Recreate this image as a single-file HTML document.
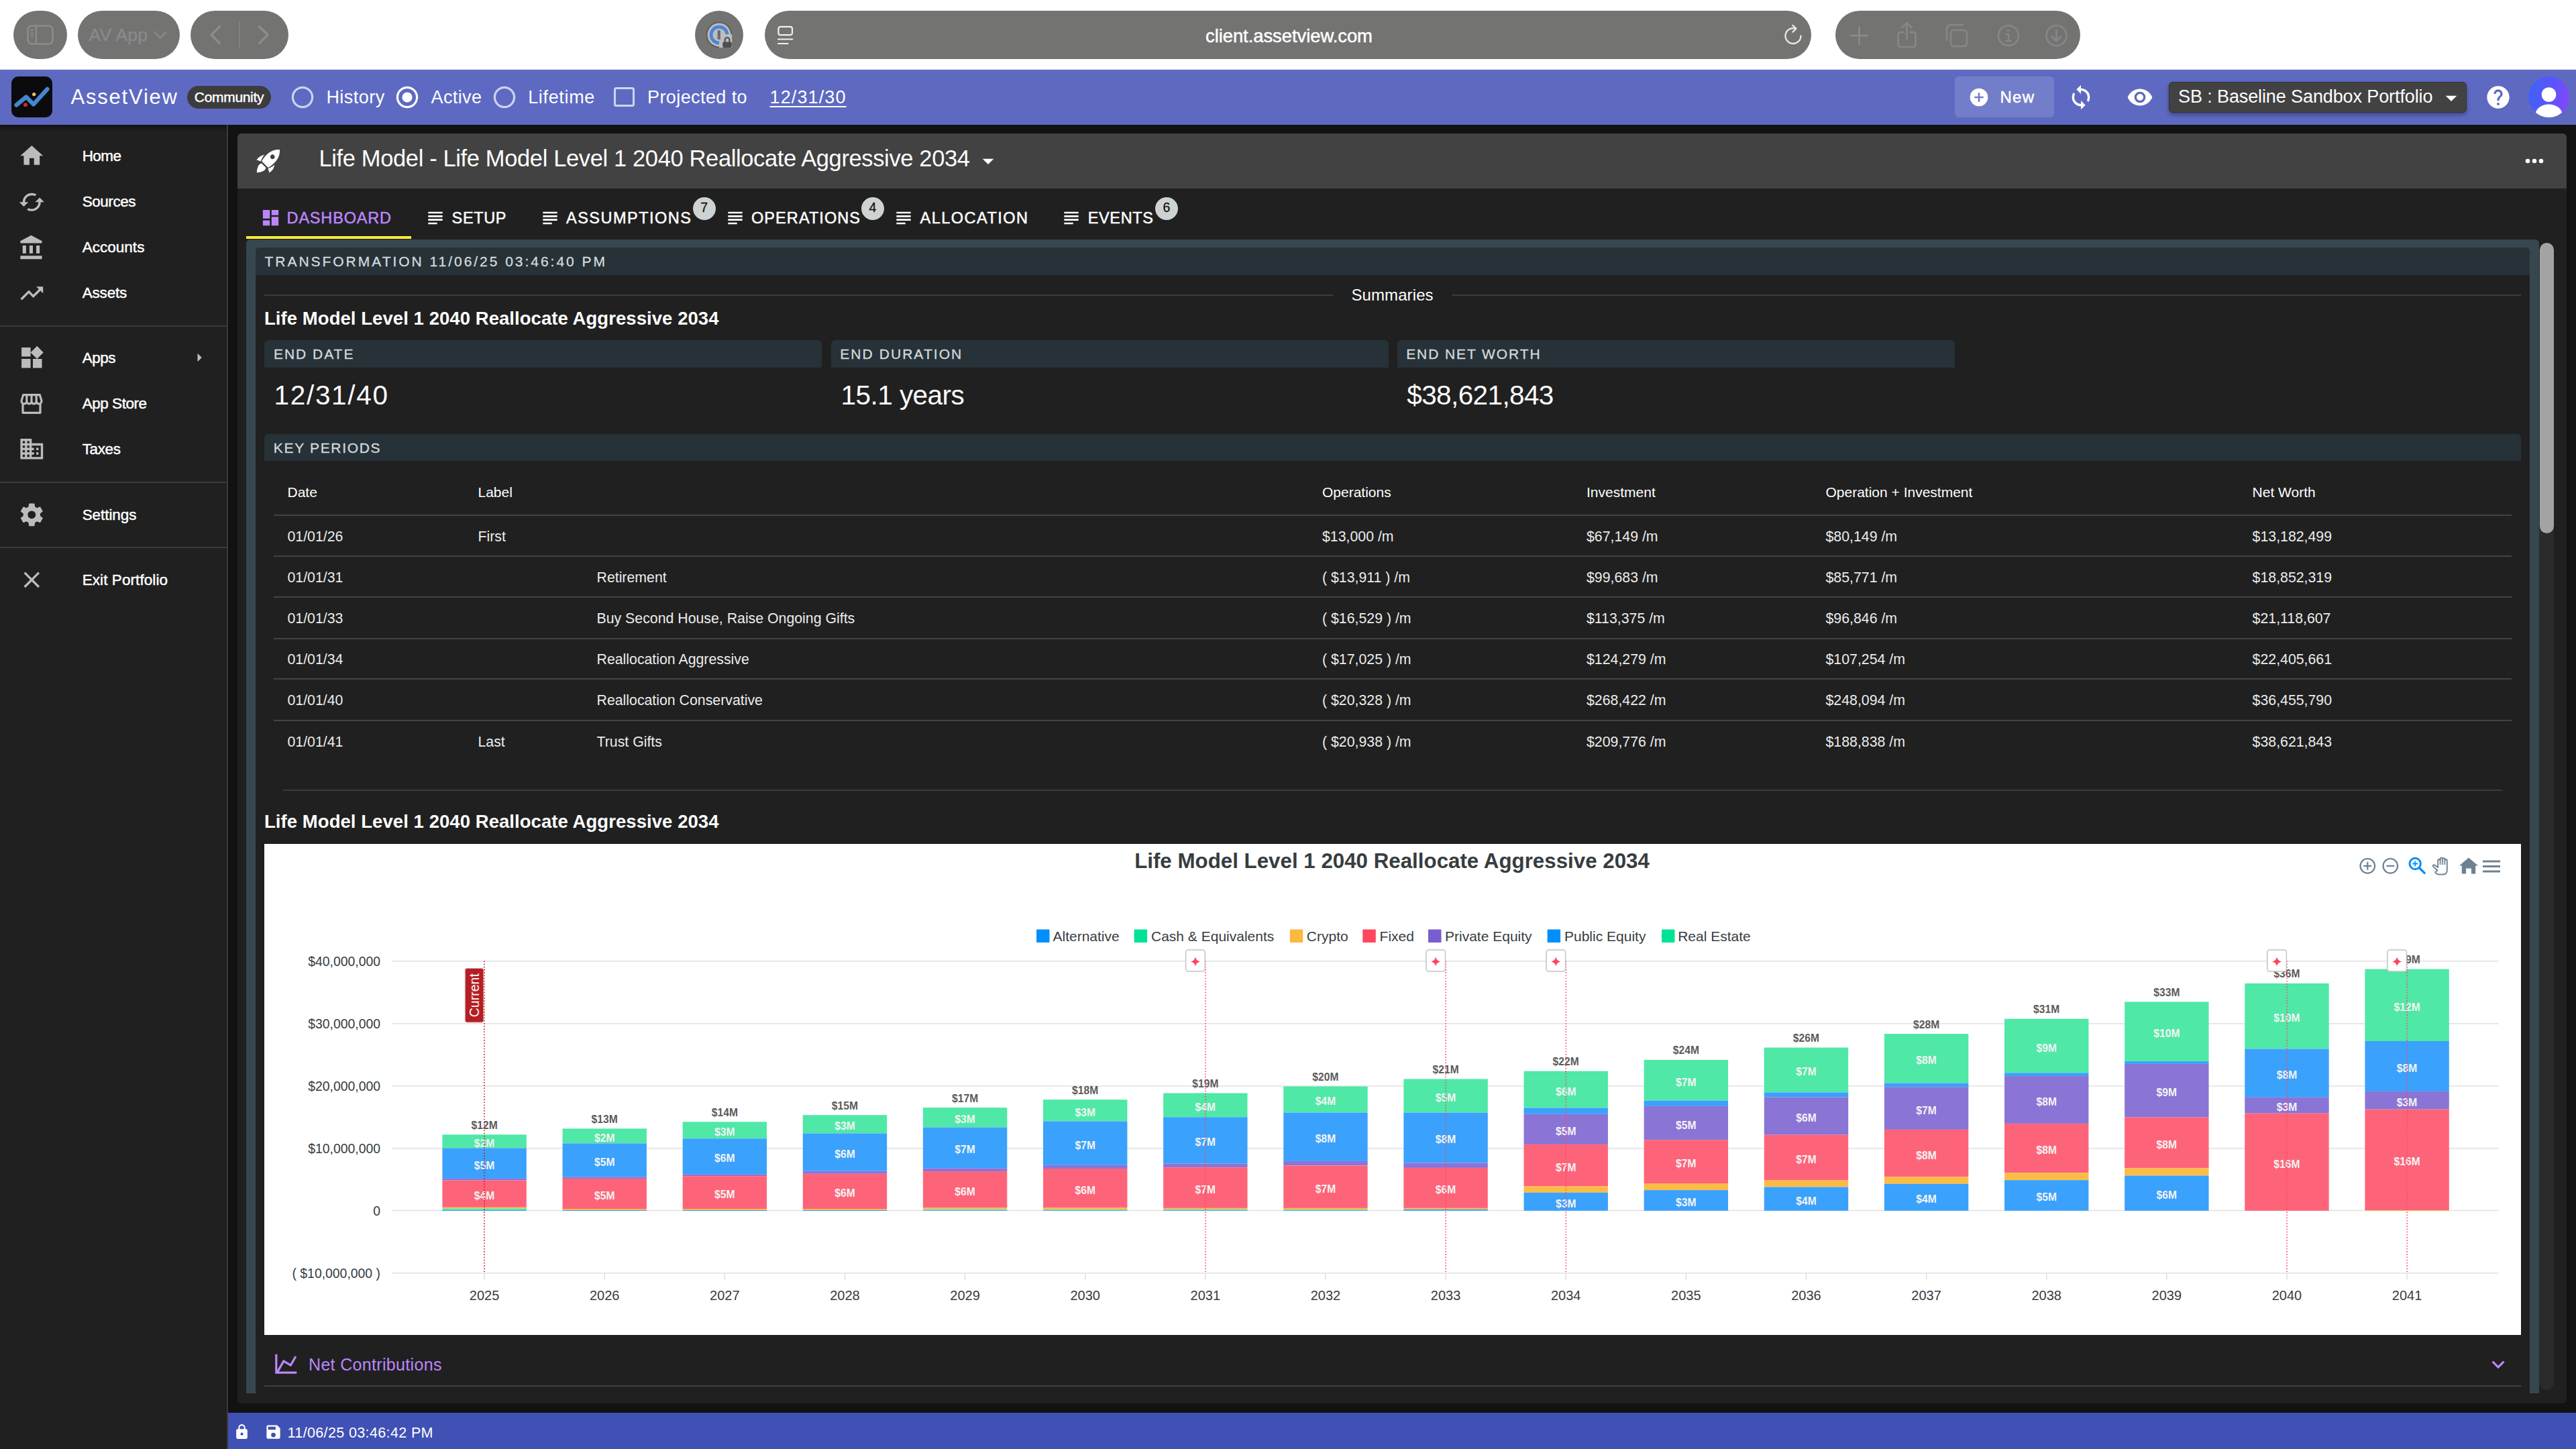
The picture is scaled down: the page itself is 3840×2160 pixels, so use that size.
<!DOCTYPE html>
<html lang="en"><head><meta charset="utf-8"><title>AssetView - Life Model</title>
<style>
html,body{margin:0;padding:0;background:#121212;}
body{width:3840px;height:2160px;overflow:hidden;position:relative;font-family:"Liberation Sans",sans-serif;}
div,svg{box-sizing:border-box;}
</style></head><body>
<div style="position:absolute;left:0.00px;top:0.00px;width:3840.00px;height:103.00px;background:#ffffff;"></div>
<div style="position:absolute;left:0.00px;top:102.50px;width:3840.00px;height:2.00px;background:#e4e4e4;"></div>
<div style="position:absolute;left:20.00px;top:16.00px;width:80.00px;height:72.00px;background:#737372;border-radius:36px;"></div>
<div style="position:absolute;left:116.00px;top:16.00px;width:152.00px;height:72.00px;background:#737372;border-radius:36px;"></div>
<div style="position:absolute;left:284.00px;top:16.00px;width:146.00px;height:72.00px;background:#737372;border-radius:36px;"></div>
<div style="position:absolute;left:1036.00px;top:16.00px;width:72.00px;height:72.00px;background:#737372;border-radius:36px;"></div>
<div style="position:absolute;left:1140.00px;top:16.00px;width:1560.00px;height:72.00px;background:#737372;border-radius:36px;"></div>
<div style="position:absolute;left:2736.00px;top:16.00px;width:365.00px;height:72.00px;background:#737372;border-radius:36px;"></div>
<svg style="position:absolute;left:40px;top:37px" width="40" height="30" viewBox="0 0 40 30"><rect x="1.5" y="1.5" width="37" height="27" rx="6" fill="none" stroke="#8c8c8c" stroke-width="2.6"/><line x1="14" y1="2" x2="14" y2="28" stroke="#8c8c8c" stroke-width="2.6"/><line x1="5.5" y1="8" x2="10" y2="8" stroke="#8c8c8c" stroke-width="2"/><line x1="5.5" y1="12.5" x2="10" y2="12.5" stroke="#8c8c8c" stroke-width="2"/><line x1="5.5" y1="17" x2="10" y2="17" stroke="#8c8c8c" stroke-width="2"/></svg>
<div style="position:absolute;left:132.50px;top:36.79px;font-size:26.50px;line-height:31.80px;color:#878a8d;white-space:pre;letter-spacing:0.212px;-webkit-text-stroke:0.50px #878a8d;">AV App</div>
<svg style="position:absolute;left:229.2px;top:46px" width="20" height="14" viewBox="0 0 20 14"><path d="M1.8 2 L10 10.5 L18.2 2" fill="none" stroke="#868686" stroke-width="3" stroke-linecap="round" stroke-linejoin="round"/></svg>
<svg style="position:absolute;left:310px;top:35px;overflow:visible" width="100" height="34" viewBox="0 0 100 34"><path d="M17.5 4.5 L4.8 17 L17.5 29.5" fill="none" stroke="#8c8c8c" stroke-width="3.2" stroke-linecap="round" stroke-linejoin="round"/><line x1="47" y1="-3" x2="47" y2="37" stroke="#868686" stroke-width="1.5"/><path d="M76.5 4.5 L89.2 17 L76.5 29.5" fill="none" stroke="#8c8c8c" stroke-width="3.2" stroke-linecap="round" stroke-linejoin="round"/></svg>
<svg style="position:absolute;left:1050px;top:30px" width="46" height="46" viewBox="0 0 46 46"><circle cx="22" cy="22" r="18.4" fill="#bdbdbd" stroke="#5e5e5e" stroke-width="2"/><circle cx="22" cy="22" r="12" fill="#bdbdbd" stroke="#4a86d8" stroke-width="4.8"/><rect x="22" y="21.2" width="19.2" height="19.8" fill="#bdbdbd"/><rect x="19.6" y="15.2" width="4.3" height="13.6" fill="#6c6c6c"/><rect x="27.2" y="32.5" width="13.6" height="8.5" rx="2" fill="#4e4e52"/><path d="M30.6 33 v-3.6 a3.4 3.4 0 0 1 6.8 0 v3.6" fill="none" stroke="#4e4e52" stroke-width="2.2"/></svg>
<svg style="position:absolute;left:1158px;top:38px" width="26" height="30" viewBox="0 0 26 30"><rect x="2.4" y="1.8" width="20.6" height="12.4" rx="3" fill="none" stroke="#f0f0f0" stroke-width="2.2"/><line x1="2" y1="20.5" x2="23.4" y2="20.5" stroke="#f0f0f0" stroke-width="2.2" stroke-linecap="round"/><line x1="2" y1="27" x2="16.5" y2="27" stroke="#f0f0f0" stroke-width="2.2" stroke-linecap="round"/></svg>
<div style="position:absolute;left:1797.00px;top:37.10px;font-size:27.50px;line-height:33.00px;color:#ffffff;white-space:pre;letter-spacing:-0.087px;-webkit-text-stroke:0.50px #ffffff;">client.assetview.com</div>
<svg style="position:absolute;left:2656px;top:36px" width="34" height="34" viewBox="0 0 34 34"><path d="M28.5 17.5 A11.5 11.5 0 1 1 20 6.4" fill="none" stroke="#e4e4e4" stroke-width="2.4" stroke-linecap="round"/><path d="M16.5 1.8 L21.5 6.6 L16.5 11.6" fill="none" stroke="#e4e4e4" stroke-width="2.4" stroke-linecap="round" stroke-linejoin="round"/></svg>
<svg style="position:absolute;left:2750px;top:30px" width="340" height="46" viewBox="0 0 340 46"><path d="M9 23 H34 M21.5 10.5 V35.5" stroke="#878787" stroke-width="3" stroke-linecap="round" fill="none"/><path transform="translate(4.5,0)" d="M83 18 h-5 a3 3 0 0 0 -3 3 v16 a3 3 0 0 0 3 3 h20 a3 3 0 0 0 3 -3 v-16 a3 3 0 0 0 -3 -3 h-5 M88 28 V5 M81 11 l7 -7 l7 7" stroke="#878787" stroke-width="2.6" stroke-linecap="round" stroke-linejoin="round" fill="none"/><rect x="158" y="15" width="24" height="24" rx="5" stroke="#878787" stroke-width="2.6" fill="none"/><path d="M152 30 v-17 a6 6 0 0 1 6 -6 h17" stroke="#878787" stroke-width="2.6" fill="none" stroke-linecap="round"/><circle cx="244" cy="23" r="15" stroke="#878787" stroke-width="2.6" fill="none"/><path d="M244 21 v10 M240.5 21 h3.5 M240 31 h8" stroke="#878787" stroke-width="2.4" fill="none" stroke-linecap="round"/><circle cx="243.5" cy="15.5" r="1.8" fill="#878787"/><circle cx="315.5" cy="23" r="15" stroke="#878787" stroke-width="2.6" fill="none"/><path d="M315.5 15 v15 M309 24.5 l6.5 6.5 l6.5 -6.5" stroke="#878787" stroke-width="2.6" fill="none" stroke-linecap="round" stroke-linejoin="round"/></svg>
<div style="position:absolute;left:0.00px;top:186.00px;width:3840.00px;height:1974.00px;background:#121212;"></div>
<div style="position:absolute;left:0.00px;top:104.00px;width:3840.00px;height:82.00px;background:#5e6ac1;"></div>
<svg style="position:absolute;left:17px;top:114px" width="61" height="61" viewBox="0 0 61 61"><rect width="61" height="61" rx="10" fill="#0b0b0d"/><path d="M7.5 42.5 L22 30.5 L33 41.5 L53.5 18.8" fill="none" stroke="#4388cf" stroke-width="6.2" stroke-linecap="round" stroke-linejoin="round"/><circle cx="33.7" cy="26.6" r="2.7" fill="#d9c26a"/><circle cx="21" cy="42.2" r="3" fill="#d6242a"/></svg>
<div style="position:absolute;left:105.50px;top:126.31px;font-size:31.00px;line-height:37.20px;color:#fff;white-space:pre;letter-spacing:1.792px;">AssetView</div>
<div style="position:absolute;left:279.00px;top:128.00px;width:125.00px;height:34.00px;background:#3c3c3c;border-radius:17px;"></div>
<div style="position:absolute;left:289.80px;top:131.97px;font-size:21.00px;line-height:25.20px;color:#fff;white-space:pre;letter-spacing:-0.312px;-webkit-text-stroke:0.45px #fff;">Community</div>
<svg style="position:absolute;left:433.4px;top:126.8px" width="36" height="36" viewBox="0 0 36 36"><circle cx="18" cy="18" r="14.6" fill="none" stroke="#cdd2ee" stroke-width="3.2"/></svg>
<div style="position:absolute;left:486.40px;top:128.89px;font-size:27.00px;line-height:32.40px;color:#fff;white-space:pre;letter-spacing:0.465px;">History</div>
<svg style="position:absolute;left:589.2px;top:126.8px" width="36" height="36" viewBox="0 0 36 36"><circle cx="18" cy="18" r="14.6" fill="none" stroke="#fff" stroke-width="3.2"/><circle cx="18" cy="18" r="7.6" fill="#fff"/></svg>
<div style="position:absolute;left:642.60px;top:128.89px;font-size:27.00px;line-height:32.40px;color:#fff;white-space:pre;letter-spacing:0.375px;">Active</div>
<svg style="position:absolute;left:734.1px;top:126.8px" width="36" height="36" viewBox="0 0 36 36"><circle cx="18" cy="18" r="14.6" fill="none" stroke="#cdd2ee" stroke-width="3.2"/></svg>
<div style="position:absolute;left:787.20px;top:128.89px;font-size:27.00px;line-height:32.40px;color:#fff;white-space:pre;letter-spacing:0.651px;">Lifetime</div>
<div style="position:absolute;left:915px;top:129.6px;width:30.6px;height:29.6px;border:3.3px solid #cdd5ee;border-radius:3.5px"></div>
<div style="position:absolute;left:965.00px;top:128.89px;font-size:27.00px;line-height:32.40px;color:#fff;white-space:pre;letter-spacing:0.410px;">Projected to</div>
<div style="position:absolute;left:1147.50px;top:128.89px;font-size:27.00px;line-height:32.40px;color:#fff;white-space:pre;letter-spacing:1.114px;text-decoration:underline;text-decoration-thickness:2px;text-underline-offset:4px;">12/31/30</div>
<div style="position:absolute;left:2914.00px;top:114.00px;width:148.00px;height:61.00px;background:#727ec9;border-radius:6px;"></div>
<svg style="position:absolute;left:2933.70px;top:128.70px;" width="32.00" height="32.00" viewBox="0 0 24 24"><path fill="#fff" d="M17,13H13V17H11V13H7V11H11V7H13V11H17M12,2A10,10 0 0,0 2,12A10,10 0 0,0 12,22A10,10 0 0,0 22,12A10,10 0 0,0 12,2Z"/></svg>
<div style="position:absolute;left:2981.40px;top:130.68px;font-size:24.00px;line-height:28.80px;color:#fff;white-space:pre;letter-spacing:1.293px;-webkit-text-stroke:0.50px #fff;">New</div>
<svg style="position:absolute;left:3082.00px;top:125.00px;" width="40.00" height="40.00" viewBox="0 0 24 24"><path fill="#fff" d="M12,18A6,6 0 0,1 6,12C6,11 6.25,10.03 6.7,9.2L5.24,7.74C4.46,8.97 4,10.43 4,12A8,8 0 0,0 12,20V23L16,19L12,15M12,4V1L8,5L12,9V6A6,6 0 0,1 18,12C18,13 17.75,13.97 17.3,14.8L18.76,16.26C19.54,15.03 20,13.57 20,12A8,8 0 0,0 12,4Z"/></svg>
<svg style="position:absolute;left:3170.00px;top:125.00px;" width="40.00" height="40.00" viewBox="0 0 24 24"><path fill="#fff" d="M12,9A3,3 0 0,0 9,12A3,3 0 0,0 12,15A3,3 0 0,0 15,12A3,3 0 0,0 12,9M12,17A5,5 0 0,1 7,12A5,5 0 0,1 12,7A5,5 0 0,1 17,12A5,5 0 0,1 12,17M12,4.5C7,4.5 2.73,7.61 1,12C2.73,16.39 7,19.5 12,19.5C17,19.5 21.27,16.39 23,12C21.27,7.61 17,4.5 12,4.5Z"/></svg>
<div style="position:absolute;left:3232.50px;top:121.50px;width:444.00px;height:46.50px;background:#424242;border-radius:6px;border:1.5px solid #333;box-shadow:0 3px 6px rgba(0,0,0,.35);"></div>
<div style="position:absolute;left:3247.00px;top:127.89px;font-size:27.00px;line-height:32.40px;color:#fff;white-space:pre;letter-spacing:-0.108px;">SB : Baseline Sandbox Portfolio</div>
<svg style="position:absolute;left:3634.00px;top:125.50px;" width="40.00" height="40.00" viewBox="0 0 24 24"><path fill="#fff" d="M7,10L12,15L17,10H7Z"/></svg>
<svg style="position:absolute;left:3704.00px;top:125.00px;" width="40.00" height="40.00" viewBox="0 0 24 24"><path fill="#fff" d="M15.07,11.25L14.17,12.17C13.45,12.89 13,13.5 13,15H11V14.5C11,13.39 11.45,12.39 12.17,11.67L13.41,10.41C13.78,10.05 14,9.55 14,9C14,7.89 13.1,7 12,7A2,2 0 0,0 10,9H8A4,4 0 0,1 12,5A4,4 0 0,1 16,9C16,9.88 15.64,10.67 15.07,11.25M13,19H11V17H13M12,2A10,10 0 0,0 2,12A10,10 0 0,0 12,22A10,10 0 0,0 22,12C22,6.47 17.5,2 12,2Z"/></svg>
<svg style="position:absolute;left:3768.5px;top:114px" width="61" height="61" viewBox="0 0 61 61"><defs><linearGradient id="avg" x1="0" y1="0.3" x2="1" y2="0.5"><stop offset="0" stop-color="#3f63f6"/><stop offset="0.55" stop-color="#5a55fa"/><stop offset="1" stop-color="#8447fb"/></linearGradient><clipPath id="avc"><circle cx="30.5" cy="30.5" r="30.5"/></clipPath></defs><circle cx="30.5" cy="30.5" r="30.5" fill="url(#avg)"/><g clip-path="url(#avc)" fill="#fff"><circle cx="30.5" cy="27" r="10.8"/><ellipse cx="30.5" cy="58" rx="20.5" ry="16.5"/></g></svg>
<div style="position:absolute;left:0.00px;top:186.00px;width:338.50px;height:1974.00px;background:#202020;"></div>
<div style="position:absolute;left:338.00px;top:186.00px;width:2.00px;height:1974.00px;background:#3a3a3a;"></div>
<div style="position:absolute;left:0.00px;top:186.00px;width:338.00px;height:11.00px;background:linear-gradient(rgba(0,0,0,.38),rgba(0,0,0,0));"></div>
<svg style="position:absolute;left:27.20px;top:212.40px;" width="40.60" height="40.60" viewBox="0 0 24 24"><path fill="#bcbcbc" d="M10,20V14H14V20H19V12H22L12,3L2,12H5V20H10Z"/></svg>
<div style="position:absolute;left:122.70px;top:218.88px;font-size:22.50px;line-height:27.00px;color:#fff;white-space:pre;letter-spacing:-0.574px;-webkit-text-stroke:0.45px #fff;">Home</div>
<svg style="position:absolute;left:27.20px;top:280.90px;" width="40.60" height="40.60" viewBox="0 0 24 24"><path fill="#bcbcbc" d="M19,8L15,12H18A6,6 0 0,1 12,18C11,18 10.03,17.75 9.2,17.3L7.74,18.76C8.97,19.54 10.43,20 12,20A8,8 0 0,0 20,12H23M6,12A6,6 0 0,1 12,6C13,6 13.97,6.25 14.8,6.7L16.26,5.24C15.03,4.46 13.57,4 12,4A8,8 0 0,0 4,12H1L5,16L9,12"/></svg>
<div style="position:absolute;left:122.70px;top:287.38px;font-size:22.50px;line-height:27.00px;color:#fff;white-space:pre;letter-spacing:-0.457px;-webkit-text-stroke:0.45px #fff;">Sources</div>
<svg style="position:absolute;left:27.20px;top:348.90px;" width="40.60" height="40.60" viewBox="0 0 24 24"><path fill="#bcbcbc" d="M11.5,1L2,6V8H21V6M16,10V17H19V10M2,22H21V19H2M10,10V17H13V10M4,10V17H7V10H4Z"/></svg>
<div style="position:absolute;left:122.70px;top:355.38px;font-size:22.50px;line-height:27.00px;color:#fff;white-space:pre;letter-spacing:0.021px;-webkit-text-stroke:0.45px #fff;">Accounts</div>
<svg style="position:absolute;left:27.20px;top:416.90px;" width="40.60" height="40.60" viewBox="0 0 24 24"><path fill="#bcbcbc" d="M16,6L18.29,8.29L13.41,13.17L9.41,9.17L2,16.59L3.41,18L9.41,12L13.41,16L19.71,9.71L22,12V6H16Z"/></svg>
<div style="position:absolute;left:122.70px;top:423.38px;font-size:22.50px;line-height:27.00px;color:#fff;white-space:pre;letter-spacing:-0.185px;-webkit-text-stroke:0.45px #fff;">Assets</div>
<svg style="position:absolute;left:27.20px;top:513.40px;" width="40.60" height="40.60" viewBox="0 0 24 24"><path fill="#bcbcbc" d="M3,3H11V11H3V3M3,13H11V21H3V13M13,13H21V21H13V13M16.66,1.69L22.31,7.34L16.66,13L11,7.34L16.66,1.69Z"/></svg>
<div style="position:absolute;left:122.70px;top:519.88px;font-size:22.50px;line-height:27.00px;color:#fff;white-space:pre;letter-spacing:-0.495px;-webkit-text-stroke:0.45px #fff;">Apps</div>
<svg style="position:absolute;left:27.3px;top:581.7px" width="40" height="40" viewBox="0 0 24 24"><path fill="none" stroke="#bcbcbc" stroke-width="1.9" stroke-linejoin="round" d="M4.6 4 H19.4 L21 9.3 C21 11 19.9 12 18.6 12 C17.3 12 16.3 11 16.3 9.6 C16.3 11 15.3 12 14.1 12 C12.9 12 12 11 12 9.6 C12 11 11.1 12 9.9 12 C8.7 12 7.7 11 7.7 9.6 C7.7 11 6.7 12 5.4 12 C4.1 12 3 11 3 9.3 Z M4.2 12 V20 H19.8 V12 M7.7 4 V9.6 M12 4 V9.6 M16.3 4 V9.6"/></svg>
<div style="position:absolute;left:122.70px;top:587.88px;font-size:22.50px;line-height:27.00px;color:#fff;white-space:pre;letter-spacing:-0.471px;-webkit-text-stroke:0.45px #fff;">App Store</div>
<svg style="position:absolute;left:27.20px;top:649.40px;" width="40.60" height="40.60" viewBox="0 0 24 24"><path fill="#bcbcbc" d="M18,15H16V17H18M18,11H16V13H18M20,19H12V17H14V15H12V13H14V11H12V9H20M10,7H8V5H10M10,11H8V9H10M10,15H8V13H10M10,19H8V17H10M6,7H4V5H6M6,11H4V9H6M6,15H4V13H6M6,19H4V17H6M12,7V3H2V21H22V7H12Z"/></svg>
<div style="position:absolute;left:122.70px;top:655.88px;font-size:22.50px;line-height:27.00px;color:#fff;white-space:pre;letter-spacing:-0.369px;-webkit-text-stroke:0.45px #fff;">Taxes</div>
<svg style="position:absolute;left:27.20px;top:747.40px;" width="40.60" height="40.60" viewBox="0 0 24 24"><path fill="#bcbcbc" d="M12,15.5A3.5,3.5 0 0,1 8.5,12A3.5,3.5 0 0,1 12,8.5A3.5,3.5 0 0,1 15.5,12A3.5,3.5 0 0,1 12,15.5M19.43,12.97C19.47,12.65 19.5,12.33 19.5,12C19.5,11.67 19.47,11.34 19.43,11L21.54,9.37C21.73,9.22 21.78,8.95 21.66,8.73L19.66,5.27C19.54,5.05 19.27,4.96 19.05,5.05L16.56,6.05C16.04,5.66 15.5,5.32 14.87,5.07L14.5,2.42C14.46,2.18 14.25,2 14,2H10C9.75,2 9.54,2.18 9.5,2.42L9.13,5.07C8.5,5.32 7.96,5.66 7.44,6.05L4.95,5.05C4.73,4.96 4.46,5.05 4.34,5.27L2.34,8.73C2.21,8.95 2.27,9.22 2.46,9.37L4.57,11C4.53,11.34 4.5,11.67 4.5,12C4.5,12.33 4.53,12.65 4.57,12.97L2.46,14.63C2.27,14.78 2.21,15.05 2.34,15.27L4.34,18.73C4.46,18.95 4.73,19.03 4.95,18.95L7.44,17.94C7.96,18.34 8.5,18.68 9.13,18.93L9.5,21.58C9.54,21.82 9.75,22 10,22H14C14.25,22 14.46,21.82 14.5,21.58L14.87,18.93C15.5,18.67 16.04,18.34 16.56,17.94L19.05,18.95C19.27,19.03 19.54,18.95 19.66,18.73L21.66,15.27C21.78,15.05 21.73,14.78 21.54,14.63L19.43,12.97Z"/></svg>
<div style="position:absolute;left:122.70px;top:753.88px;font-size:22.50px;line-height:27.00px;color:#fff;white-space:pre;letter-spacing:-0.072px;-webkit-text-stroke:0.45px #fff;">Settings</div>
<svg style="position:absolute;left:27.20px;top:844.40px;" width="40.60" height="40.60" viewBox="0 0 24 24"><path fill="#bcbcbc" d="M19,6.41L17.59,5L12,10.59L6.41,5L5,6.41L10.59,12L5,17.59L6.41,19L12,13.41L17.59,19L19,17.59L13.41,12L19,6.41Z"/></svg>
<div style="position:absolute;left:122.70px;top:850.88px;font-size:22.50px;line-height:27.00px;color:#fff;white-space:pre;letter-spacing:0.077px;-webkit-text-stroke:0.45px #fff;">Exit Portfolio</div>
<svg style="position:absolute;left:282.00px;top:518.00px;" width="30.00" height="30.00" viewBox="0 0 24 24"><path fill="#bcbcbc" d="M10,17L15,12L10,7V17Z"/></svg>
<div style="position:absolute;left:0.00px;top:485.00px;width:338.00px;height:2.00px;background:#3a3a3a;"></div>
<div style="position:absolute;left:0.00px;top:718.00px;width:338.00px;height:2.00px;background:#3a3a3a;"></div>
<div style="position:absolute;left:0.00px;top:815.00px;width:338.00px;height:2.00px;background:#3a3a3a;"></div>
<div style="position:absolute;left:340.00px;top:2105.50px;width:3500.00px;height:54.50px;background:#3f51b5;"></div>
<svg style="position:absolute;left:347.50px;top:2122.00px;" width="25.00" height="25.00" viewBox="0 0 24 24"><path fill="#fff" d="M12,17A2,2 0 0,0 14,15C14,13.89 13.1,13 12,13A2,2 0 0,0 10,15A2,2 0 0,0 12,17M18,8A2,2 0 0,1 20,10V20A2,2 0 0,1 18,22H6A2,2 0 0,1 4,20V10C4,8.89 4.9,8 6,8H7V6A5,5 0 0,1 12,1A5,5 0 0,1 17,6V8H18M12,3A3,3 0 0,0 9,6V8H15V6A3,3 0 0,0 12,3Z"/></svg>
<svg style="position:absolute;left:393.90px;top:2121.00px;" width="27.00" height="27.00" viewBox="0 0 24 24"><path fill="#fff" d="M15,9H5V5H15M12,19A3,3 0 0,1 9,16A3,3 0 0,1 12,13A3,3 0 0,1 15,16A3,3 0 0,1 12,19M17,3H5C3.89,3 3,3.9 3,5V19A2,2 0 0,0 5,21H19A2,2 0 0,0 21,19V7L17,3Z"/></svg>
<div style="position:absolute;left:428.60px;top:2123.78px;font-size:21.50px;line-height:25.80px;color:#fff;white-space:pre;letter-spacing:0.364px;">11/06/25 03:46:42 PM</div>
<div style="position:absolute;left:354.00px;top:198.50px;width:3472.00px;height:1893.50px;background:#202020;border-radius:6px;"></div>
<div style="position:absolute;left:354.00px;top:198.50px;width:3472.00px;height:82.50px;background:#424242;border-radius:6px 6px 0 0;"></div>
<svg style="position:absolute;left:375px;top:215px" width="50" height="50" viewBox="-25 -25 50 50"><g transform="rotate(45)" fill="#fff"><path fill-rule="evenodd" d="M0,-24 C8.5,-17 10.2,-5 6.8,7.2 L-6.8,7.2 C-10.2,-5 -8.5,-17 0,-24Z M0,-12.2 a3.4,3.4 0 1,0 0.01,0Z"/><path d="M-10.6,-2.5 C-13.5,1.5 -14.5,6 -13.6,11.2 L-7.6,8.4 C-9.3,5 -10.3,1.5 -10.6,-2.5Z"/><path d="M10.6,-2.5 C13.5,1.5 14.5,6 13.6,11.2 L7.6,8.4 C9.3,5 10.3,1.5 10.6,-2.5Z"/><path d="M-4.6,9.6 C-7.5,14 -4.5,19 0,24.5 C4.5,19 7.5,14 4.6,9.6Z"/></g></svg>
<div style="position:absolute;left:475.50px;top:216.22px;font-size:34.50px;line-height:41.40px;color:#fff;white-space:pre;letter-spacing:-0.371px;">Life Model - Life Model Level 1 2040 Reallocate Aggressive 2034</div>
<svg style="position:absolute;left:1453.00px;top:220.00px;" width="40.00" height="40.00" viewBox="0 0 24 24"><path fill="#fff" d="M7,10L12,15L17,10H7Z"/></svg>
<svg style="position:absolute;left:3758.00px;top:219.50px;" width="40.00" height="40.00" viewBox="0 0 24 24"><path fill="#fff" d="M16,12A2,2 0 0,1 18,10A2,2 0 0,1 20,12A2,2 0 0,1 18,14A2,2 0 0,1 16,12M10,12A2,2 0 0,1 12,10A2,2 0 0,1 14,12A2,2 0 0,1 12,14A2,2 0 0,1 10,12M4,12A2,2 0 0,1 6,10A2,2 0 0,1 8,12A2,2 0 0,1 6,14A2,2 0 0,1 4,12Z"/></svg>
<svg style="position:absolute;left:387.50px;top:309.00px;" width="31.00" height="31.00" viewBox="0 0 24 24"><path fill="#bb86fc" d="M13,3V9H21V3M13,21H21V11H13M3,21H11V15H3M3,13H11V3H3V13Z"/></svg>
<div style="position:absolute;left:427.60px;top:310.78px;font-size:23.50px;line-height:28.20px;color:#bb86fc;white-space:pre;letter-spacing:0.817px;-webkit-text-stroke:0.50px #bb86fc;">DASHBOARD</div>
<svg style="position:absolute;left:633.00px;top:308.50px;" width="32.00" height="32.00" viewBox="0 0 24 24"><path fill="#fff" d="M14 17H4v2h10v-2zm6-8H4v2h16V9zM4 15h16v-2H4v2zM4 5v2h16V5H4z"/></svg>
<div style="position:absolute;left:673.60px;top:310.78px;font-size:23.50px;line-height:28.20px;color:#fff;white-space:pre;letter-spacing:0.637px;-webkit-text-stroke:0.50px #fff;">SETUP</div>
<svg style="position:absolute;left:804.00px;top:308.50px;" width="32.00" height="32.00" viewBox="0 0 24 24"><path fill="#fff" d="M14 17H4v2h10v-2zm6-8H4v2h16V9zM4 15h16v-2H4v2zM4 5v2h16V5H4z"/></svg>
<div style="position:absolute;left:844.00px;top:310.78px;font-size:23.50px;line-height:28.20px;color:#fff;white-space:pre;letter-spacing:1.494px;-webkit-text-stroke:0.50px #fff;">ASSUMPTIONS</div>
<div style="position:absolute;left:1032.6px;top:293.5px;width:34px;height:34px;border-radius:17px;background:#cfd2d2"></div>
<div style="position:absolute;left:1044.18px;top:298.37px;font-size:19.50px;line-height:23.40px;color:#111;white-space:pre;-webkit-text-stroke:0.30px #111;">7</div>
<svg style="position:absolute;left:1080.00px;top:308.50px;" width="32.00" height="32.00" viewBox="0 0 24 24"><path fill="#fff" d="M14 17H4v2h10v-2zm6-8H4v2h16V9zM4 15h16v-2H4v2zM4 5v2h16V5H4z"/></svg>
<div style="position:absolute;left:1120.00px;top:310.78px;font-size:23.50px;line-height:28.20px;color:#fff;white-space:pre;letter-spacing:1.073px;-webkit-text-stroke:0.50px #fff;">OPERATIONS</div>
<div style="position:absolute;left:1284.0px;top:293.5px;width:34px;height:34px;border-radius:17px;background:#cfd2d2"></div>
<div style="position:absolute;left:1295.58px;top:298.37px;font-size:19.50px;line-height:23.40px;color:#111;white-space:pre;-webkit-text-stroke:0.30px #111;">4</div>
<svg style="position:absolute;left:1331.00px;top:308.50px;" width="32.00" height="32.00" viewBox="0 0 24 24"><path fill="#fff" d="M14 17H4v2h10v-2zm6-8H4v2h16V9zM4 15h16v-2H4v2zM4 5v2h16V5H4z"/></svg>
<div style="position:absolute;left:1371.60px;top:310.78px;font-size:23.50px;line-height:28.20px;color:#fff;white-space:pre;letter-spacing:1.474px;-webkit-text-stroke:0.50px #fff;">ALLOCATION</div>
<svg style="position:absolute;left:1581.00px;top:308.50px;" width="32.00" height="32.00" viewBox="0 0 24 24"><path fill="#fff" d="M14 17H4v2h10v-2zm6-8H4v2h16V9zM4 15h16v-2H4v2zM4 5v2h16V5H4z"/></svg>
<div style="position:absolute;left:1621.70px;top:310.78px;font-size:23.50px;line-height:28.20px;color:#fff;white-space:pre;letter-spacing:0.654px;-webkit-text-stroke:0.50px #fff;">EVENTS</div>
<div style="position:absolute;left:1722.0px;top:293.5px;width:34px;height:34px;border-radius:17px;background:#cfd2d2"></div>
<div style="position:absolute;left:1733.58px;top:298.37px;font-size:19.50px;line-height:23.40px;color:#111;white-space:pre;-webkit-text-stroke:0.30px #111;">6</div>
<div style="position:absolute;left:367.00px;top:351.50px;width:246.00px;height:4.50px;background:#ffeb3b;"></div>
<div style="position:absolute;left:3785.00px;top:362.00px;width:22.00px;height:1710.00px;background:#2b2b2b;border-radius:11px;"></div>
<div style="position:absolute;left:3785.50px;top:362.00px;width:21.50px;height:433.00px;background:#a3a3a3;border-radius:11px;"></div>
<div style="position:absolute;left:367.00px;top:357.00px;width:3418.00px;height:1719.50px;background:#37474f;border-radius:6px 6px 0 0;"></div>
<div style="position:absolute;left:381.00px;top:369.00px;width:3390.00px;height:1707.50px;background:#202020;border-radius:6px 6px 0 0;"></div>
<div style="position:absolute;left:381.00px;top:369.00px;width:3390.00px;height:41.00px;background:#263238;border-radius:6px 6px 0 0;"></div>
<div style="position:absolute;left:394.50px;top:377.47px;font-size:21.00px;line-height:25.20px;color:#d5dadc;white-space:pre;letter-spacing:2.969px;-webkit-text-stroke:0.30px #d5dadc;">TRANSFORMATION 11/06/25 03:46:40 PM</div>
<div style="position:absolute;left:394.00px;top:439.00px;width:1592.50px;height:2.00px;background:#3c3c3c;"></div>
<div style="position:absolute;left:2164.00px;top:439.00px;width:1594.00px;height:2.00px;background:#3c3c3c;"></div>
<div style="position:absolute;left:2014.40px;top:425.68px;font-size:24.00px;line-height:28.80px;color:#fff;white-space:pre;letter-spacing:0.104px;">Summaries</div>
<div style="position:absolute;left:394.00px;top:457.60px;font-size:27.50px;line-height:33.00px;color:#fff;white-space:pre;font-weight:700;letter-spacing:0.059px;">Life Model Level 1 2040 Reallocate Aggressive 2034</div>
<div style="position:absolute;left:394.00px;top:507.00px;width:831.00px;height:41.00px;background:#263238;border-radius:6px 6px 0 0;"></div>
<div style="position:absolute;left:408.00px;top:515.47px;font-size:21.00px;line-height:25.20px;color:#d5dadc;white-space:pre;letter-spacing:1.968px;-webkit-text-stroke:0.30px #d5dadc;">END DATE</div>
<div style="position:absolute;left:408.50px;top:564.64px;font-size:40.50px;line-height:48.60px;color:#fff;white-space:pre;letter-spacing:1.692px;">12/31/40</div>
<div style="position:absolute;left:1238.50px;top:507.00px;width:831.00px;height:41.00px;background:#263238;border-radius:6px 6px 0 0;"></div>
<div style="position:absolute;left:1252.20px;top:515.47px;font-size:21.00px;line-height:25.20px;color:#d5dadc;white-space:pre;letter-spacing:2.074px;-webkit-text-stroke:0.30px #d5dadc;">END DURATION</div>
<div style="position:absolute;left:1253.50px;top:564.64px;font-size:40.50px;line-height:48.60px;color:#fff;white-space:pre;letter-spacing:-0.535px;">15.1 years</div>
<div style="position:absolute;left:2083.00px;top:507.00px;width:831.00px;height:41.00px;background:#263238;border-radius:6px 6px 0 0;"></div>
<div style="position:absolute;left:2096.20px;top:515.47px;font-size:21.00px;line-height:25.20px;color:#d5dadc;white-space:pre;letter-spacing:1.903px;-webkit-text-stroke:0.30px #d5dadc;">END NET WORTH</div>
<div style="position:absolute;left:2097.30px;top:564.64px;font-size:40.50px;line-height:48.60px;color:#fff;white-space:pre;letter-spacing:-0.613px;">$38,621,843</div>
<div style="position:absolute;left:394.00px;top:647.00px;width:3363.50px;height:40.00px;background:#263238;border-radius:6px 6px 0 0;"></div>
<div style="position:absolute;left:407.80px;top:654.97px;font-size:21.00px;line-height:25.20px;color:#d5dadc;white-space:pre;letter-spacing:1.680px;-webkit-text-stroke:0.30px #d5dadc;">KEY PERIODS</div>
<div style="position:absolute;left:428.50px;top:721.47px;font-size:21.00px;line-height:25.20px;color:#fff;white-space:pre;">Date</div>
<div style="position:absolute;left:712.50px;top:721.47px;font-size:21.00px;line-height:25.20px;color:#fff;white-space:pre;">Label</div>
<div style="position:absolute;left:1971.00px;top:721.47px;font-size:21.00px;line-height:25.20px;color:#fff;white-space:pre;">Operations</div>
<div style="position:absolute;left:2365.00px;top:721.47px;font-size:21.00px;line-height:25.20px;color:#fff;white-space:pre;">Investment</div>
<div style="position:absolute;left:2721.50px;top:721.47px;font-size:21.00px;line-height:25.20px;color:#fff;white-space:pre;">Operation + Investment</div>
<div style="position:absolute;left:3357.60px;top:721.47px;font-size:21.00px;line-height:25.20px;color:#fff;white-space:pre;">Net Worth</div>
<div style="position:absolute;left:408.00px;top:767.00px;width:3336.00px;height:2.00px;background:#434343;"></div>
<div style="position:absolute;left:428.50px;top:787.89px;font-size:21.30px;line-height:25.56px;color:#ececec;white-space:pre;">01/01/26</div>
<div style="position:absolute;left:712.50px;top:787.89px;font-size:21.30px;line-height:25.56px;color:#ececec;white-space:pre;">First</div>
<div style="position:absolute;left:1971.00px;top:787.89px;font-size:21.30px;line-height:25.56px;color:#ececec;white-space:pre;">$13,000 /m</div>
<div style="position:absolute;left:2365.00px;top:787.89px;font-size:21.30px;line-height:25.56px;color:#ececec;white-space:pre;">$67,149 /m</div>
<div style="position:absolute;left:2721.50px;top:787.89px;font-size:21.30px;line-height:25.56px;color:#ececec;white-space:pre;">$80,149 /m</div>
<div style="position:absolute;left:3357.60px;top:787.89px;font-size:21.30px;line-height:25.56px;color:#ececec;white-space:pre;">$13,182,499</div>
<div style="position:absolute;left:408.00px;top:828.00px;width:3336.00px;height:2.00px;background:#434343;"></div>
<div style="position:absolute;left:428.50px;top:848.59px;font-size:21.30px;line-height:25.56px;color:#ececec;white-space:pre;">01/01/31</div>
<div style="position:absolute;left:889.50px;top:848.59px;font-size:21.30px;line-height:25.56px;color:#ececec;white-space:pre;">Retirement</div>
<div style="position:absolute;left:1971.00px;top:848.59px;font-size:21.30px;line-height:25.56px;color:#ececec;white-space:pre;">( $13,911 ) /m</div>
<div style="position:absolute;left:2365.00px;top:848.59px;font-size:21.30px;line-height:25.56px;color:#ececec;white-space:pre;">$99,683 /m</div>
<div style="position:absolute;left:2721.50px;top:848.59px;font-size:21.30px;line-height:25.56px;color:#ececec;white-space:pre;">$85,771 /m</div>
<div style="position:absolute;left:3357.60px;top:848.59px;font-size:21.30px;line-height:25.56px;color:#ececec;white-space:pre;">$18,852,319</div>
<div style="position:absolute;left:408.00px;top:889.00px;width:3336.00px;height:2.00px;background:#434343;"></div>
<div style="position:absolute;left:428.50px;top:909.59px;font-size:21.30px;line-height:25.56px;color:#ececec;white-space:pre;">01/01/33</div>
<div style="position:absolute;left:889.50px;top:909.59px;font-size:21.30px;line-height:25.56px;color:#ececec;white-space:pre;">Buy Second House, Raise Ongoing Gifts</div>
<div style="position:absolute;left:1971.00px;top:909.59px;font-size:21.30px;line-height:25.56px;color:#ececec;white-space:pre;">( $16,529 ) /m</div>
<div style="position:absolute;left:2365.00px;top:909.59px;font-size:21.30px;line-height:25.56px;color:#ececec;white-space:pre;">$113,375 /m</div>
<div style="position:absolute;left:2721.50px;top:909.59px;font-size:21.30px;line-height:25.56px;color:#ececec;white-space:pre;">$96,846 /m</div>
<div style="position:absolute;left:3357.60px;top:909.59px;font-size:21.30px;line-height:25.56px;color:#ececec;white-space:pre;">$21,118,607</div>
<div style="position:absolute;left:408.00px;top:951.00px;width:3336.00px;height:2.00px;background:#434343;"></div>
<div style="position:absolute;left:428.50px;top:970.59px;font-size:21.30px;line-height:25.56px;color:#ececec;white-space:pre;">01/01/34</div>
<div style="position:absolute;left:889.50px;top:970.59px;font-size:21.30px;line-height:25.56px;color:#ececec;white-space:pre;">Reallocation Aggressive</div>
<div style="position:absolute;left:1971.00px;top:970.59px;font-size:21.30px;line-height:25.56px;color:#ececec;white-space:pre;">( $17,025 ) /m</div>
<div style="position:absolute;left:2365.00px;top:970.59px;font-size:21.30px;line-height:25.56px;color:#ececec;white-space:pre;">$124,279 /m</div>
<div style="position:absolute;left:2721.50px;top:970.59px;font-size:21.30px;line-height:25.56px;color:#ececec;white-space:pre;">$107,254 /m</div>
<div style="position:absolute;left:3357.60px;top:970.59px;font-size:21.30px;line-height:25.56px;color:#ececec;white-space:pre;">$22,405,661</div>
<div style="position:absolute;left:408.00px;top:1011.00px;width:3336.00px;height:2.00px;background:#434343;"></div>
<div style="position:absolute;left:428.50px;top:1031.59px;font-size:21.30px;line-height:25.56px;color:#ececec;white-space:pre;">01/01/40</div>
<div style="position:absolute;left:889.50px;top:1031.59px;font-size:21.30px;line-height:25.56px;color:#ececec;white-space:pre;">Reallocation Conservative</div>
<div style="position:absolute;left:1971.00px;top:1031.59px;font-size:21.30px;line-height:25.56px;color:#ececec;white-space:pre;">( $20,328 ) /m</div>
<div style="position:absolute;left:2365.00px;top:1031.59px;font-size:21.30px;line-height:25.56px;color:#ececec;white-space:pre;">$268,422 /m</div>
<div style="position:absolute;left:2721.50px;top:1031.59px;font-size:21.30px;line-height:25.56px;color:#ececec;white-space:pre;">$248,094 /m</div>
<div style="position:absolute;left:3357.60px;top:1031.59px;font-size:21.30px;line-height:25.56px;color:#ececec;white-space:pre;">$36,455,790</div>
<div style="position:absolute;left:408.00px;top:1073.00px;width:3336.00px;height:2.00px;background:#434343;"></div>
<div style="position:absolute;left:428.50px;top:1093.89px;font-size:21.30px;line-height:25.56px;color:#ececec;white-space:pre;">01/01/41</div>
<div style="position:absolute;left:712.50px;top:1093.89px;font-size:21.30px;line-height:25.56px;color:#ececec;white-space:pre;">Last</div>
<div style="position:absolute;left:889.50px;top:1093.89px;font-size:21.30px;line-height:25.56px;color:#ececec;white-space:pre;">Trust Gifts</div>
<div style="position:absolute;left:1971.00px;top:1093.89px;font-size:21.30px;line-height:25.56px;color:#ececec;white-space:pre;">( $20,938 ) /m</div>
<div style="position:absolute;left:2365.00px;top:1093.89px;font-size:21.30px;line-height:25.56px;color:#ececec;white-space:pre;">$209,776 /m</div>
<div style="position:absolute;left:2721.50px;top:1093.89px;font-size:21.30px;line-height:25.56px;color:#ececec;white-space:pre;">$188,838 /m</div>
<div style="position:absolute;left:3357.60px;top:1093.89px;font-size:21.30px;line-height:25.56px;color:#ececec;white-space:pre;">$38,621,843</div>
<div style="position:absolute;left:422.00px;top:1176.50px;width:3307.50px;height:2.00px;background:#3c3c3c;"></div>
<div style="position:absolute;left:394.00px;top:1207.90px;font-size:27.50px;line-height:33.00px;color:#fff;white-space:pre;font-weight:700;letter-spacing:0.059px;">Life Model Level 1 2040 Reallocate Aggressive 2034</div>
<svg style="position:absolute;left:406.75px;top:2013.75px;" width="38.50" height="38.50" viewBox="0 0 24 24"><path fill="#bb86fc" d="M16,11.78L20.24,4.45L21.97,5.45L16.74,14.5L10.23,10.75L5.46,19H22V21H2V3H4V17.54L9.5,8L16,11.78Z"/></svg>
<div style="position:absolute;left:460.00px;top:2018.59px;font-size:25.00px;line-height:30.00px;color:#bb86fc;white-space:pre;letter-spacing:0.328px;">Net Contributions</div>
<svg style="position:absolute;left:3705.30px;top:2014.50px;" width="38.00" height="38.00" viewBox="0 0 24 24"><path fill="#bb86fc" d="M7.41,8.58L12,13.17L16.59,8.58L18,10L12,16L6,10L7.41,8.58Z"/></svg>
<div style="position:absolute;left:394.00px;top:2064.50px;width:3364.00px;height:2.00px;background:#404040;"></div>
<div style="position:absolute;left:394.00px;top:1257.50px;width:3364.00px;height:732.50px;background:#ffffff;"></div>
<svg style="position:absolute;left:394px;top:1257.5px" width="3364" height="732.5" viewBox="394 1257.5 3364 732.5" font-family="Liberation Sans, sans-serif"><line x1="584" x2="3725" y1="1432.30" y2="1432.30" stroke="#e0e0e0" stroke-width="1.5"/>
<text x="567.00" y="1439.59" font-size="19.40" fill="#373d3f" text-anchor="end" >$40,000,000</text>
<line x1="584" x2="3725" y1="1525.40" y2="1525.40" stroke="#e0e0e0" stroke-width="1.5"/>
<text x="567.00" y="1532.69" font-size="19.40" fill="#373d3f" text-anchor="end" >$30,000,000</text>
<line x1="584" x2="3725" y1="1618.40" y2="1618.40" stroke="#e0e0e0" stroke-width="1.5"/>
<text x="567.00" y="1625.69" font-size="19.40" fill="#373d3f" text-anchor="end" >$20,000,000</text>
<line x1="584" x2="3725" y1="1711.20" y2="1711.20" stroke="#e0e0e0" stroke-width="1.5"/>
<text x="567.00" y="1718.49" font-size="19.40" fill="#373d3f" text-anchor="end" >$10,000,000</text>
<line x1="584" x2="3725" y1="1804.10" y2="1804.10" stroke="#e0e0e0" stroke-width="1.5"/>
<text x="567.00" y="1811.39" font-size="19.40" fill="#373d3f" text-anchor="end" >0</text>
<line x1="584" x2="3725" y1="1897.30" y2="1897.30" stroke="#e0e0e0" stroke-width="1.5"/>
<text x="567.00" y="1904.59" font-size="19.40" fill="#373d3f" text-anchor="end" >( $10,000,000 )</text>
<line x1="722.10" x2="722.10" y1="1897.3" y2="1908" stroke="#e0e0e0" stroke-width="1.5"/>
<text x="722.10" y="1937.70" font-size="20.00" fill="#373d3f" text-anchor="middle" >2025</text>
<line x1="901.23" x2="901.23" y1="1897.3" y2="1908" stroke="#e0e0e0" stroke-width="1.5"/>
<text x="901.23" y="1937.70" font-size="20.00" fill="#373d3f" text-anchor="middle" >2026</text>
<line x1="1080.35" x2="1080.35" y1="1897.3" y2="1908" stroke="#e0e0e0" stroke-width="1.5"/>
<text x="1080.35" y="1937.70" font-size="20.00" fill="#373d3f" text-anchor="middle" >2027</text>
<line x1="1259.47" x2="1259.47" y1="1897.3" y2="1908" stroke="#e0e0e0" stroke-width="1.5"/>
<text x="1259.47" y="1937.70" font-size="20.00" fill="#373d3f" text-anchor="middle" >2028</text>
<line x1="1438.60" x2="1438.60" y1="1897.3" y2="1908" stroke="#e0e0e0" stroke-width="1.5"/>
<text x="1438.60" y="1937.70" font-size="20.00" fill="#373d3f" text-anchor="middle" >2029</text>
<line x1="1617.72" x2="1617.72" y1="1897.3" y2="1908" stroke="#e0e0e0" stroke-width="1.5"/>
<text x="1617.72" y="1937.70" font-size="20.00" fill="#373d3f" text-anchor="middle" >2030</text>
<line x1="1796.85" x2="1796.85" y1="1897.3" y2="1908" stroke="#e0e0e0" stroke-width="1.5"/>
<text x="1796.85" y="1937.70" font-size="20.00" fill="#373d3f" text-anchor="middle" >2031</text>
<line x1="1975.97" x2="1975.97" y1="1897.3" y2="1908" stroke="#e0e0e0" stroke-width="1.5"/>
<text x="1975.97" y="1937.70" font-size="20.00" fill="#373d3f" text-anchor="middle" >2032</text>
<line x1="2155.10" x2="2155.10" y1="1897.3" y2="1908" stroke="#e0e0e0" stroke-width="1.5"/>
<text x="2155.10" y="1937.70" font-size="20.00" fill="#373d3f" text-anchor="middle" >2033</text>
<line x1="2334.22" x2="2334.22" y1="1897.3" y2="1908" stroke="#e0e0e0" stroke-width="1.5"/>
<text x="2334.22" y="1937.70" font-size="20.00" fill="#373d3f" text-anchor="middle" >2034</text>
<line x1="2513.35" x2="2513.35" y1="1897.3" y2="1908" stroke="#e0e0e0" stroke-width="1.5"/>
<text x="2513.35" y="1937.70" font-size="20.00" fill="#373d3f" text-anchor="middle" >2035</text>
<line x1="2692.47" x2="2692.47" y1="1897.3" y2="1908" stroke="#e0e0e0" stroke-width="1.5"/>
<text x="2692.47" y="1937.70" font-size="20.00" fill="#373d3f" text-anchor="middle" >2036</text>
<line x1="2871.60" x2="2871.60" y1="1897.3" y2="1908" stroke="#e0e0e0" stroke-width="1.5"/>
<text x="2871.60" y="1937.70" font-size="20.00" fill="#373d3f" text-anchor="middle" >2037</text>
<line x1="3050.72" x2="3050.72" y1="1897.3" y2="1908" stroke="#e0e0e0" stroke-width="1.5"/>
<text x="3050.72" y="1937.70" font-size="20.00" fill="#373d3f" text-anchor="middle" >2038</text>
<line x1="3229.85" x2="3229.85" y1="1897.3" y2="1908" stroke="#e0e0e0" stroke-width="1.5"/>
<text x="3229.85" y="1937.70" font-size="20.00" fill="#373d3f" text-anchor="middle" >2039</text>
<line x1="3408.97" x2="3408.97" y1="1897.3" y2="1908" stroke="#e0e0e0" stroke-width="1.5"/>
<text x="3408.97" y="1937.70" font-size="20.00" fill="#373d3f" text-anchor="middle" >2040</text>
<line x1="3588.10" x2="3588.10" y1="1897.3" y2="1908" stroke="#e0e0e0" stroke-width="1.5"/>
<text x="3588.10" y="1937.70" font-size="20.00" fill="#373d3f" text-anchor="middle" >2041</text>
<rect x="659.40" y="1690.80" width="125.40" height="20.20" fill="#4fe8a6"/>
<rect x="659.40" y="1711.00" width="125.40" height="45.40" fill="#3aa1fc"/>
<rect x="659.40" y="1756.40" width="125.40" height="2.60" fill="#8a74d6"/>
<rect x="659.40" y="1759.00" width="125.40" height="40.30" fill="#fe6479"/>
<rect x="659.40" y="1799.30" width="125.40" height="1.70" fill="#fbbc46"/>
<rect x="659.40" y="1801.00" width="125.40" height="2.40" fill="#4fe8a6"/>
<rect x="659.40" y="1803.40" width="125.40" height="1.10" fill="#3aa1fc"/>
<rect x="838.52" y="1681.90" width="125.40" height="22.00" fill="#4fe8a6"/>
<rect x="838.52" y="1703.90" width="125.40" height="49.90" fill="#3aa1fc"/>
<rect x="838.52" y="1753.80" width="125.40" height="2.60" fill="#8a74d6"/>
<rect x="838.52" y="1756.40" width="125.40" height="45.10" fill="#fe6479"/>
<rect x="838.52" y="1801.50" width="125.40" height="1.90" fill="#fbbc46"/>
<rect x="838.52" y="1803.40" width="125.40" height="1.10" fill="#3aa1fc"/>
<rect x="1017.65" y="1671.80" width="125.40" height="25.00" fill="#4fe8a6"/>
<rect x="1017.65" y="1696.80" width="125.40" height="52.90" fill="#3aa1fc"/>
<rect x="1017.65" y="1749.70" width="125.40" height="3.00" fill="#8a74d6"/>
<rect x="1017.65" y="1752.70" width="125.40" height="48.80" fill="#fe6479"/>
<rect x="1017.65" y="1801.50" width="125.40" height="1.90" fill="#fbbc46"/>
<rect x="1017.65" y="1803.40" width="125.40" height="1.10" fill="#3aa1fc"/>
<rect x="1196.77" y="1661.70" width="125.40" height="27.30" fill="#4fe8a6"/>
<rect x="1196.77" y="1689.00" width="125.40" height="56.20" fill="#3aa1fc"/>
<rect x="1196.77" y="1745.20" width="125.40" height="4.10" fill="#8a74d6"/>
<rect x="1196.77" y="1749.30" width="125.40" height="52.20" fill="#fe6479"/>
<rect x="1196.77" y="1801.50" width="125.40" height="1.90" fill="#fbbc46"/>
<rect x="1196.77" y="1803.40" width="125.40" height="1.10" fill="#3aa1fc"/>
<rect x="1375.90" y="1650.60" width="125.40" height="29.40" fill="#4fe8a6"/>
<rect x="1375.90" y="1680.00" width="125.40" height="60.80" fill="#3aa1fc"/>
<rect x="1375.90" y="1740.80" width="125.40" height="4.80" fill="#8a74d6"/>
<rect x="1375.90" y="1745.60" width="125.40" height="54.40" fill="#fe6479"/>
<rect x="1375.90" y="1800.00" width="125.40" height="2.30" fill="#fbbc46"/>
<rect x="1375.90" y="1802.30" width="125.40" height="1.00" fill="#4fe8a6"/>
<rect x="1375.90" y="1803.30" width="125.40" height="1.00" fill="#3aa1fc"/>
<rect x="1555.02" y="1638.70" width="125.40" height="32.30" fill="#4fe8a6"/>
<rect x="1555.02" y="1671.00" width="125.40" height="65.30" fill="#3aa1fc"/>
<rect x="1555.02" y="1736.30" width="125.40" height="5.20" fill="#8a74d6"/>
<rect x="1555.02" y="1741.50" width="125.40" height="58.50" fill="#fe6479"/>
<rect x="1555.02" y="1800.00" width="125.40" height="2.60" fill="#fbbc46"/>
<rect x="1555.02" y="1802.60" width="125.40" height="0.80" fill="#4fe8a6"/>
<rect x="1555.02" y="1803.40" width="125.40" height="0.90" fill="#3aa1fc"/>
<rect x="1734.15" y="1629.00" width="125.40" height="35.80" fill="#4fe8a6"/>
<rect x="1734.15" y="1664.80" width="125.40" height="69.20" fill="#3aa1fc"/>
<rect x="1734.15" y="1734.00" width="125.40" height="5.70" fill="#8a74d6"/>
<rect x="1734.15" y="1739.70" width="125.40" height="60.70" fill="#fe6479"/>
<rect x="1734.15" y="1800.40" width="125.40" height="1.90" fill="#fbbc46"/>
<rect x="1734.15" y="1802.30" width="125.40" height="1.00" fill="#4fe8a6"/>
<rect x="1734.15" y="1803.30" width="125.40" height="1.00" fill="#3aa1fc"/>
<rect x="1913.27" y="1619.00" width="125.40" height="39.00" fill="#4fe8a6"/>
<rect x="1913.27" y="1658.00" width="125.40" height="72.40" fill="#3aa1fc"/>
<rect x="1913.27" y="1730.40" width="125.40" height="6.60" fill="#8a74d6"/>
<rect x="1913.27" y="1737.00" width="125.40" height="63.40" fill="#fe6479"/>
<rect x="1913.27" y="1800.40" width="125.40" height="2.20" fill="#fbbc46"/>
<rect x="1913.27" y="1802.60" width="125.40" height="0.80" fill="#4fe8a6"/>
<rect x="1913.27" y="1803.40" width="125.40" height="0.90" fill="#3aa1fc"/>
<rect x="2092.40" y="1608.00" width="125.40" height="50.00" fill="#4fe8a6"/>
<rect x="2092.40" y="1658.00" width="125.40" height="75.00" fill="#3aa1fc"/>
<rect x="2092.40" y="1733.00" width="125.40" height="7.40" fill="#8a74d6"/>
<rect x="2092.40" y="1740.40" width="125.40" height="60.00" fill="#fe6479"/>
<rect x="2092.40" y="1800.40" width="125.40" height="1.90" fill="#fbbc46"/>
<rect x="2092.40" y="1802.30" width="125.40" height="2.00" fill="#3aa1fc"/>
<rect x="2271.53" y="1596.20" width="125.40" height="54.80" fill="#4fe8a6"/>
<rect x="2271.53" y="1651.00" width="125.40" height="9.30" fill="#3aa1fc"/>
<rect x="2271.53" y="1660.30" width="125.40" height="45.10" fill="#8a74d6"/>
<rect x="2271.53" y="1705.40" width="125.40" height="62.60" fill="#fe6479"/>
<rect x="2271.53" y="1768.00" width="125.40" height="9.30" fill="#fbbc46"/>
<rect x="2271.53" y="1777.30" width="125.40" height="27.00" fill="#3aa1fc"/>
<rect x="2450.65" y="1579.40" width="125.40" height="60.80" fill="#4fe8a6"/>
<rect x="2450.65" y="1640.20" width="125.40" height="8.20" fill="#3aa1fc"/>
<rect x="2450.65" y="1648.40" width="125.40" height="50.30" fill="#8a74d6"/>
<rect x="2450.65" y="1698.70" width="125.40" height="64.80" fill="#fe6479"/>
<rect x="2450.65" y="1763.50" width="125.40" height="10.10" fill="#fbbc46"/>
<rect x="2450.65" y="1773.60" width="125.40" height="30.70" fill="#3aa1fc"/>
<rect x="2629.78" y="1561.10" width="125.40" height="66.80" fill="#4fe8a6"/>
<rect x="2629.78" y="1627.90" width="125.40" height="7.10" fill="#3aa1fc"/>
<rect x="2629.78" y="1635.00" width="125.40" height="56.20" fill="#8a74d6"/>
<rect x="2629.78" y="1691.20" width="125.40" height="67.80" fill="#fe6479"/>
<rect x="2629.78" y="1759.00" width="125.40" height="10.00" fill="#fbbc46"/>
<rect x="2629.78" y="1769.00" width="125.40" height="35.30" fill="#3aa1fc"/>
<rect x="2808.90" y="1540.60" width="125.40" height="73.40" fill="#4fe8a6"/>
<rect x="2808.90" y="1614.00" width="125.40" height="5.70" fill="#3aa1fc"/>
<rect x="2808.90" y="1619.70" width="125.40" height="63.70" fill="#8a74d6"/>
<rect x="2808.90" y="1683.40" width="125.40" height="70.40" fill="#fe6479"/>
<rect x="2808.90" y="1753.80" width="125.40" height="10.50" fill="#fbbc46"/>
<rect x="2808.90" y="1764.30" width="125.40" height="40.00" fill="#3aa1fc"/>
<rect x="2988.03" y="1518.30" width="125.40" height="80.50" fill="#4fe8a6"/>
<rect x="2988.03" y="1598.80" width="125.40" height="4.80" fill="#3aa1fc"/>
<rect x="2988.03" y="1603.60" width="125.40" height="70.80" fill="#8a74d6"/>
<rect x="2988.03" y="1674.40" width="125.40" height="73.50" fill="#fe6479"/>
<rect x="2988.03" y="1747.90" width="125.40" height="10.80" fill="#fbbc46"/>
<rect x="2988.03" y="1758.70" width="125.40" height="45.60" fill="#3aa1fc"/>
<rect x="3167.15" y="1492.90" width="125.40" height="88.70" fill="#4fe8a6"/>
<rect x="3167.15" y="1581.60" width="125.40" height="3.80" fill="#3aa1fc"/>
<rect x="3167.15" y="1585.40" width="125.40" height="79.70" fill="#8a74d6"/>
<rect x="3167.15" y="1665.10" width="125.40" height="75.70" fill="#fe6479"/>
<rect x="3167.15" y="1740.80" width="125.40" height="11.20" fill="#fbbc46"/>
<rect x="3167.15" y="1752.00" width="125.40" height="52.30" fill="#3aa1fc"/>
<rect x="3346.28" y="1465.40" width="125.40" height="97.60" fill="#4fe8a6"/>
<rect x="3346.28" y="1563.00" width="125.40" height="72.30" fill="#3aa1fc"/>
<rect x="3346.28" y="1635.30" width="125.40" height="23.90" fill="#8a74d6"/>
<rect x="3346.28" y="1659.20" width="125.40" height="145.10" fill="#fe6479"/>
<rect x="3525.40" y="1444.10" width="125.40" height="107.40" fill="#4fe8a6"/>
<rect x="3525.40" y="1551.50" width="125.40" height="74.90" fill="#3aa1fc"/>
<rect x="3525.40" y="1626.40" width="125.40" height="26.80" fill="#8a74d6"/>
<rect x="3525.40" y="1653.20" width="125.40" height="150.40" fill="#fe6479"/>
<rect x="3525.40" y="1803.60" width="125.40" height="1.00" fill="#fbbc46"/>
<text x="722.10" y="1709.36" font-size="15.60" fill="#f4f4f4" text-anchor="middle" font-weight="700" letter-spacing="0.1">$2M</text>
<text x="722.10" y="1742.16" font-size="15.60" fill="#f4f4f4" text-anchor="middle" font-weight="700" letter-spacing="0.1">$5M</text>
<text x="722.10" y="1787.61" font-size="15.60" fill="#f4f4f4" text-anchor="middle" font-weight="700" letter-spacing="0.1">$4M</text>
<text x="722.10" y="1682.26" font-size="15.60" fill="#5a5a5a" text-anchor="middle" font-weight="700" letter-spacing="0.1">$12M</text>
<text x="901.23" y="1701.36" font-size="15.60" fill="#f4f4f4" text-anchor="middle" font-weight="700" letter-spacing="0.1">$2M</text>
<text x="901.23" y="1737.31" font-size="15.60" fill="#f4f4f4" text-anchor="middle" font-weight="700" letter-spacing="0.1">$5M</text>
<text x="901.23" y="1787.41" font-size="15.60" fill="#f4f4f4" text-anchor="middle" font-weight="700" letter-spacing="0.1">$5M</text>
<text x="901.23" y="1673.36" font-size="15.60" fill="#5a5a5a" text-anchor="middle" font-weight="700" letter-spacing="0.1">$13M</text>
<text x="1080.35" y="1692.76" font-size="15.60" fill="#f4f4f4" text-anchor="middle" font-weight="700" letter-spacing="0.1">$3M</text>
<text x="1080.35" y="1731.71" font-size="15.60" fill="#f4f4f4" text-anchor="middle" font-weight="700" letter-spacing="0.1">$6M</text>
<text x="1080.35" y="1785.56" font-size="15.60" fill="#f4f4f4" text-anchor="middle" font-weight="700" letter-spacing="0.1">$5M</text>
<text x="1080.35" y="1663.26" font-size="15.60" fill="#5a5a5a" text-anchor="middle" font-weight="700" letter-spacing="0.1">$14M</text>
<text x="1259.47" y="1683.81" font-size="15.60" fill="#f4f4f4" text-anchor="middle" font-weight="700" letter-spacing="0.1">$3M</text>
<text x="1259.47" y="1725.56" font-size="15.60" fill="#f4f4f4" text-anchor="middle" font-weight="700" letter-spacing="0.1">$6M</text>
<text x="1259.47" y="1783.86" font-size="15.60" fill="#f4f4f4" text-anchor="middle" font-weight="700" letter-spacing="0.1">$6M</text>
<text x="1259.47" y="1653.16" font-size="15.60" fill="#5a5a5a" text-anchor="middle" font-weight="700" letter-spacing="0.1">$15M</text>
<text x="1438.60" y="1673.76" font-size="15.60" fill="#f4f4f4" text-anchor="middle" font-weight="700" letter-spacing="0.1">$3M</text>
<text x="1438.60" y="1718.86" font-size="15.60" fill="#f4f4f4" text-anchor="middle" font-weight="700" letter-spacing="0.1">$7M</text>
<text x="1438.60" y="1781.26" font-size="15.60" fill="#f4f4f4" text-anchor="middle" font-weight="700" letter-spacing="0.1">$6M</text>
<text x="1438.60" y="1642.06" font-size="15.60" fill="#5a5a5a" text-anchor="middle" font-weight="700" letter-spacing="0.1">$17M</text>
<text x="1617.72" y="1663.31" font-size="15.60" fill="#f4f4f4" text-anchor="middle" font-weight="700" letter-spacing="0.1">$3M</text>
<text x="1617.72" y="1712.11" font-size="15.60" fill="#f4f4f4" text-anchor="middle" font-weight="700" letter-spacing="0.1">$7M</text>
<text x="1617.72" y="1779.21" font-size="15.60" fill="#f4f4f4" text-anchor="middle" font-weight="700" letter-spacing="0.1">$6M</text>
<text x="1617.72" y="1630.16" font-size="15.60" fill="#5a5a5a" text-anchor="middle" font-weight="700" letter-spacing="0.1">$18M</text>
<text x="1796.85" y="1655.36" font-size="15.60" fill="#f4f4f4" text-anchor="middle" font-weight="700" letter-spacing="0.1">$4M</text>
<text x="1796.85" y="1707.86" font-size="15.60" fill="#f4f4f4" text-anchor="middle" font-weight="700" letter-spacing="0.1">$7M</text>
<text x="1796.85" y="1778.51" font-size="15.60" fill="#f4f4f4" text-anchor="middle" font-weight="700" letter-spacing="0.1">$7M</text>
<text x="1796.85" y="1620.46" font-size="15.60" fill="#5a5a5a" text-anchor="middle" font-weight="700" letter-spacing="0.1">$19M</text>
<text x="1975.97" y="1646.96" font-size="15.60" fill="#f4f4f4" text-anchor="middle" font-weight="700" letter-spacing="0.1">$4M</text>
<text x="1975.97" y="1702.66" font-size="15.60" fill="#f4f4f4" text-anchor="middle" font-weight="700" letter-spacing="0.1">$8M</text>
<text x="1975.97" y="1777.16" font-size="15.60" fill="#f4f4f4" text-anchor="middle" font-weight="700" letter-spacing="0.1">$7M</text>
<text x="1975.97" y="1610.46" font-size="15.60" fill="#5a5a5a" text-anchor="middle" font-weight="700" letter-spacing="0.1">$20M</text>
<text x="2155.10" y="1641.46" font-size="15.60" fill="#f4f4f4" text-anchor="middle" font-weight="700" letter-spacing="0.1">$5M</text>
<text x="2155.10" y="1703.96" font-size="15.60" fill="#f4f4f4" text-anchor="middle" font-weight="700" letter-spacing="0.1">$8M</text>
<text x="2155.10" y="1778.86" font-size="15.60" fill="#f4f4f4" text-anchor="middle" font-weight="700" letter-spacing="0.1">$6M</text>
<text x="2155.10" y="1599.46" font-size="15.60" fill="#5a5a5a" text-anchor="middle" font-weight="700" letter-spacing="0.1">$21M</text>
<text x="2334.22" y="1632.06" font-size="15.60" fill="#f4f4f4" text-anchor="middle" font-weight="700" letter-spacing="0.1">$6M</text>
<text x="2334.22" y="1691.31" font-size="15.60" fill="#f4f4f4" text-anchor="middle" font-weight="700" letter-spacing="0.1">$5M</text>
<text x="2334.22" y="1745.16" font-size="15.60" fill="#f4f4f4" text-anchor="middle" font-weight="700" letter-spacing="0.1">$7M</text>
<text x="2334.22" y="1799.26" font-size="15.60" fill="#f4f4f4" text-anchor="middle" font-weight="700" letter-spacing="0.1">$3M</text>
<text x="2334.22" y="1587.66" font-size="15.60" fill="#5a5a5a" text-anchor="middle" font-weight="700" letter-spacing="0.1">$22M</text>
<text x="2513.35" y="1618.26" font-size="15.60" fill="#f4f4f4" text-anchor="middle" font-weight="700" letter-spacing="0.1">$7M</text>
<text x="2513.35" y="1682.01" font-size="15.60" fill="#f4f4f4" text-anchor="middle" font-weight="700" letter-spacing="0.1">$5M</text>
<text x="2513.35" y="1739.56" font-size="15.60" fill="#f4f4f4" text-anchor="middle" font-weight="700" letter-spacing="0.1">$7M</text>
<text x="2513.35" y="1797.41" font-size="15.60" fill="#f4f4f4" text-anchor="middle" font-weight="700" letter-spacing="0.1">$3M</text>
<text x="2513.35" y="1570.86" font-size="15.60" fill="#5a5a5a" text-anchor="middle" font-weight="700" letter-spacing="0.1">$24M</text>
<text x="2692.47" y="1602.96" font-size="15.60" fill="#f4f4f4" text-anchor="middle" font-weight="700" letter-spacing="0.1">$7M</text>
<text x="2692.47" y="1671.56" font-size="15.60" fill="#f4f4f4" text-anchor="middle" font-weight="700" letter-spacing="0.1">$6M</text>
<text x="2692.47" y="1733.56" font-size="15.60" fill="#f4f4f4" text-anchor="middle" font-weight="700" letter-spacing="0.1">$7M</text>
<text x="2692.47" y="1795.11" font-size="15.60" fill="#f4f4f4" text-anchor="middle" font-weight="700" letter-spacing="0.1">$4M</text>
<text x="2692.47" y="1552.56" font-size="15.60" fill="#5a5a5a" text-anchor="middle" font-weight="700" letter-spacing="0.1">$26M</text>
<text x="2871.60" y="1585.76" font-size="15.60" fill="#f4f4f4" text-anchor="middle" font-weight="700" letter-spacing="0.1">$8M</text>
<text x="2871.60" y="1660.01" font-size="15.60" fill="#f4f4f4" text-anchor="middle" font-weight="700" letter-spacing="0.1">$7M</text>
<text x="2871.60" y="1727.06" font-size="15.60" fill="#f4f4f4" text-anchor="middle" font-weight="700" letter-spacing="0.1">$8M</text>
<text x="2871.60" y="1792.76" font-size="15.60" fill="#f4f4f4" text-anchor="middle" font-weight="700" letter-spacing="0.1">$4M</text>
<text x="2871.60" y="1532.06" font-size="15.60" fill="#5a5a5a" text-anchor="middle" font-weight="700" letter-spacing="0.1">$28M</text>
<text x="3050.72" y="1567.01" font-size="15.60" fill="#f4f4f4" text-anchor="middle" font-weight="700" letter-spacing="0.1">$9M</text>
<text x="3050.72" y="1647.46" font-size="15.60" fill="#f4f4f4" text-anchor="middle" font-weight="700" letter-spacing="0.1">$8M</text>
<text x="3050.72" y="1719.61" font-size="15.60" fill="#f4f4f4" text-anchor="middle" font-weight="700" letter-spacing="0.1">$8M</text>
<text x="3050.72" y="1789.96" font-size="15.60" fill="#f4f4f4" text-anchor="middle" font-weight="700" letter-spacing="0.1">$5M</text>
<text x="3050.72" y="1509.76" font-size="15.60" fill="#5a5a5a" text-anchor="middle" font-weight="700" letter-spacing="0.1">$31M</text>
<text x="3229.85" y="1545.71" font-size="15.60" fill="#f4f4f4" text-anchor="middle" font-weight="700" letter-spacing="0.1">$10M</text>
<text x="3229.85" y="1633.71" font-size="15.60" fill="#f4f4f4" text-anchor="middle" font-weight="700" letter-spacing="0.1">$9M</text>
<text x="3229.85" y="1711.41" font-size="15.60" fill="#f4f4f4" text-anchor="middle" font-weight="700" letter-spacing="0.1">$8M</text>
<text x="3229.85" y="1786.61" font-size="15.60" fill="#f4f4f4" text-anchor="middle" font-weight="700" letter-spacing="0.1">$6M</text>
<text x="3229.85" y="1484.36" font-size="15.60" fill="#5a5a5a" text-anchor="middle" font-weight="700" letter-spacing="0.1">$33M</text>
<text x="3408.97" y="1522.66" font-size="15.60" fill="#f4f4f4" text-anchor="middle" font-weight="700" letter-spacing="0.1">$10M</text>
<text x="3408.97" y="1607.61" font-size="15.60" fill="#f4f4f4" text-anchor="middle" font-weight="700" letter-spacing="0.1">$8M</text>
<text x="3408.97" y="1655.71" font-size="15.60" fill="#f4f4f4" text-anchor="middle" font-weight="700" letter-spacing="0.1">$3M</text>
<text x="3408.97" y="1740.21" font-size="15.60" fill="#f4f4f4" text-anchor="middle" font-weight="700" letter-spacing="0.1">$16M</text>
<text x="3408.97" y="1456.86" font-size="15.60" fill="#5a5a5a" text-anchor="middle" font-weight="700" letter-spacing="0.1">$36M</text>
<text x="3588.10" y="1506.26" font-size="15.60" fill="#f4f4f4" text-anchor="middle" font-weight="700" letter-spacing="0.1">$12M</text>
<text x="3588.10" y="1597.41" font-size="15.60" fill="#f4f4f4" text-anchor="middle" font-weight="700" letter-spacing="0.1">$8M</text>
<text x="3588.10" y="1648.26" font-size="15.60" fill="#f4f4f4" text-anchor="middle" font-weight="700" letter-spacing="0.1">$3M</text>
<text x="3588.10" y="1736.86" font-size="15.60" fill="#f4f4f4" text-anchor="middle" font-weight="700" letter-spacing="0.1">$16M</text>
<text x="3588.10" y="1435.56" font-size="15.60" fill="#5a5a5a" text-anchor="middle" font-weight="700" letter-spacing="0.1">$39M</text>
<text x="2075.00" y="1293.95" font-size="31.30" fill="#373d3f" text-anchor="middle" font-weight="700" >Life Model Level 1 2040 Reallocate Aggressive 2034</text>
<rect x="1545.00" y="1385" width="19.5" height="19.5" rx="0.8" fill="#008ffb"/>
<text x="1569.50" y="1402.35" font-size="21.00" fill="#373d3f" text-anchor="start" >Alternative</text>
<rect x="1690.60" y="1385" width="19.5" height="19.5" rx="0.8" fill="#00e396"/>
<text x="1716.00" y="1402.35" font-size="21.00" fill="#373d3f" text-anchor="start" >Cash &amp; Equivalents</text>
<rect x="1922.80" y="1385" width="19.5" height="19.5" rx="0.8" fill="#fcb83f"/>
<text x="1947.80" y="1402.35" font-size="21.00" fill="#373d3f" text-anchor="start" >Crypto</text>
<rect x="2031.30" y="1385" width="19.5" height="19.5" rx="0.8" fill="#ff4560"/>
<text x="2056.60" y="1402.35" font-size="21.00" fill="#373d3f" text-anchor="start" >Fixed</text>
<rect x="2129.00" y="1385" width="19.5" height="19.5" rx="0.8" fill="#775dd0"/>
<text x="2154.00" y="1402.35" font-size="21.00" fill="#373d3f" text-anchor="start" >Private Equity</text>
<rect x="2306.60" y="1385" width="19.5" height="19.5" rx="0.8" fill="#008ffb"/>
<text x="2332.00" y="1402.35" font-size="21.00" fill="#373d3f" text-anchor="start" >Public Equity</text>
<rect x="2477.00" y="1385" width="19.5" height="19.5" rx="0.8" fill="#00e396"/>
<text x="2501.20" y="1402.35" font-size="21.00" fill="#373d3f" text-anchor="start" >Real Estate</text>
<line x1="722" x2="722" y1="1432" y2="1897" stroke="#c4161c" stroke-width="1.6" stroke-dasharray="1.6 2.6"/>
<rect x="693.3" y="1443" width="27.6" height="80.5" rx="3" fill="#b51f24" stroke="#d9a9a9" stroke-width="1"/>
<text transform="translate(714.2,1483.2) rotate(-90)" font-size="19.5" fill="#fff" text-anchor="middle">Current</text>
<line x1="1796.95" x2="1796.95" y1="1432" y2="1897" stroke="#ff4560" stroke-width="1.6" stroke-dasharray="1.6 2.6"/>
<rect x="1767.65" y="1415.6" width="28.6" height="32" rx="3.5" fill="#fff" stroke="#c4c4c4" stroke-width="1.5"/>
<path d="M1781.95 1426.00 Q1783.15 1431.80 1788.95 1433.00 Q1783.15 1434.20 1781.95 1440.00 Q1780.75 1434.20 1774.95 1433.00 Q1780.75 1431.80 1781.95 1426.00 Z" fill="#ff4560"/>
<line x1="2155.20" x2="2155.20" y1="1432" y2="1897" stroke="#ff4560" stroke-width="1.6" stroke-dasharray="1.6 2.6"/>
<rect x="2125.90" y="1415.6" width="28.6" height="32" rx="3.5" fill="#fff" stroke="#c4c4c4" stroke-width="1.5"/>
<path d="M2140.20 1426.00 Q2141.40 1431.80 2147.20 1433.00 Q2141.40 1434.20 2140.20 1440.00 Q2139.00 1434.20 2133.20 1433.00 Q2139.00 1431.80 2140.20 1426.00 Z" fill="#ff4560"/>
<line x1="2334.32" x2="2334.32" y1="1432" y2="1897" stroke="#ff4560" stroke-width="1.6" stroke-dasharray="1.6 2.6"/>
<rect x="2305.02" y="1415.6" width="28.6" height="32" rx="3.5" fill="#fff" stroke="#c4c4c4" stroke-width="1.5"/>
<path d="M2319.32 1426.00 Q2320.52 1431.80 2326.32 1433.00 Q2320.52 1434.20 2319.32 1440.00 Q2318.12 1434.20 2312.32 1433.00 Q2318.12 1431.80 2319.32 1426.00 Z" fill="#ff4560"/>
<line x1="3409.07" x2="3409.07" y1="1432" y2="1897" stroke="#ff4560" stroke-width="1.6" stroke-dasharray="1.6 2.6"/>
<rect x="3379.77" y="1415.6" width="28.6" height="32" rx="3.5" fill="#fff" stroke="#c4c4c4" stroke-width="1.5"/>
<path d="M3394.07 1426.00 Q3395.27 1431.80 3401.07 1433.00 Q3395.27 1434.20 3394.07 1440.00 Q3392.88 1434.20 3387.07 1433.00 Q3392.88 1431.80 3394.07 1426.00 Z" fill="#ff4560"/>
<line x1="3588.20" x2="3588.20" y1="1432" y2="1897" stroke="#ff4560" stroke-width="1.6" stroke-dasharray="1.6 2.6"/>
<rect x="3558.90" y="1415.6" width="28.6" height="32" rx="3.5" fill="#fff" stroke="#c4c4c4" stroke-width="1.5"/>
<path d="M3573.20 1426.00 Q3574.40 1431.80 3580.20 1433.00 Q3574.40 1434.20 3573.20 1440.00 Q3572.00 1434.20 3566.20 1433.00 Q3572.00 1431.80 3573.20 1426.00 Z" fill="#ff4560"/>
<g fill="none" stroke="#6e8192" stroke-width="2.2"><circle cx="3529.3" cy="1290.3" r="10.8"/><path d="M3523.3 1290.3h12M3529.3 1284.3v12"/><circle cx="3563.3" cy="1290.3" r="10.8"/><path d="M3557.3 1290.3h12"/></g>
<g fill="none" stroke="#008ffb"><circle cx="3600.2" cy="1287" r="8.2" stroke-width="3"/><path d="M3606.5 1293.3l8.6 8.6" stroke-width="3.4"/><path d="M3596.2 1287h8M3600.2 1283v8" stroke-width="1.8"/></g>
<path d="M3633.5 1297 l-6.3 -5.6 c-1.5 -1.4 0.6 -3.6 2.4 -2.2 l4.6 3.4 v-10.4 c0 -2.3 3.4 -2.3 3.4 0 v-2.4 c0 -2.3 3.4 -2.3 3.4 0 v0.6 c0 -2.3 3.4 -2.3 3.4 0 v1.8 c0 -2.3 3.4 -2.3 3.4 0 v14.4 c0 3.6 -2 6.4 -5 6.4 h-7.6 c-2.4 0 -3.9 -1.4 -5.1 -3.4 z" fill="#fff" stroke="#6e8192" stroke-width="1.9" stroke-linejoin="round"/>
<path d="M3637.6 1280.6v8M3641 1279.6v9M3644.4 1281v7.6" stroke="#6e8192" stroke-width="1.7"/>
<path d="M3680 1278 l14 12 h-3.8 v12 h-6.2 v-8 h-8 v8 h-6.2 v-12 h-3.8 z" fill="#6e8192"/>
<path d="M3701 1283.6h26M3701 1291h26M3701 1298.4h26" stroke="#6e8192" stroke-width="3"/></svg>
</body></html>
